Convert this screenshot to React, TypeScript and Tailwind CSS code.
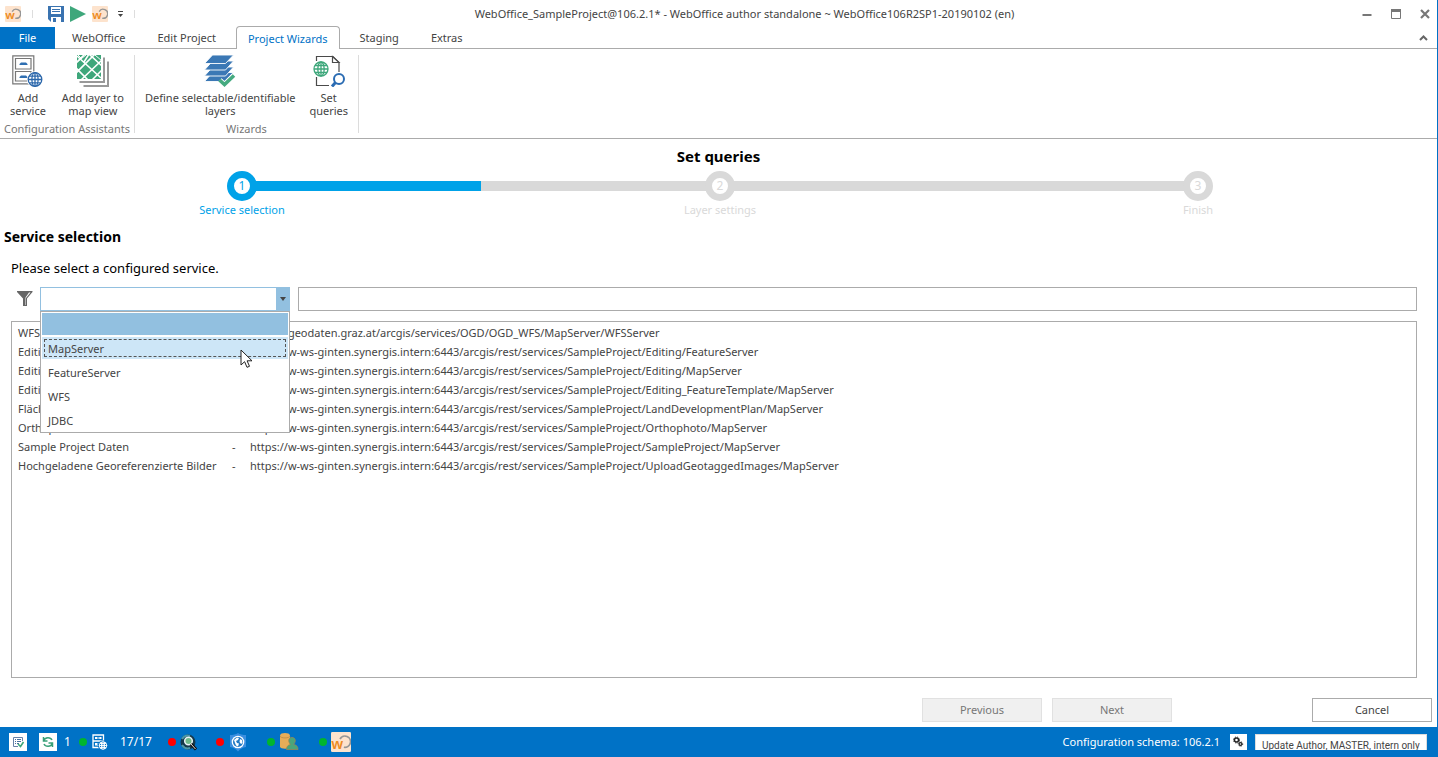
import React, { useState } from "react";

const services = [
  ["WFS", "https://geodaten.graz.at/arcgis/services/OGD/OGD_WFS/MapServer/WFSServer"],
  ["Editing", "https://w-ws-ginten.synergis.intern:6443/arcgis/rest/services/SampleProject/Editing/FeatureServer"],
  ["Editing", "https://w-ws-ginten.synergis.intern:6443/arcgis/rest/services/SampleProject/Editing/MapServer"],
  ["Editing", "https://w-ws-ginten.synergis.intern:6443/arcgis/rest/services/SampleProject/Editing_FeatureTemplate/MapServer"],
  ["Flächen", "https://w-ws-ginten.synergis.intern:6443/arcgis/rest/services/SampleProject/LandDevelopmentPlan/MapServer"],
  ["Orthophoto", "https://w-ws-ginten.synergis.intern:6443/arcgis/rest/services/SampleProject/Orthophoto/MapServer"],
  ["Sample Project Daten", "https://w-ws-ginten.synergis.intern:6443/arcgis/rest/services/SampleProject/SampleProject/MapServer"],
  ["Hochgeladene Georeferenzierte Bilder", "https://w-ws-ginten.synergis.intern:6443/arcgis/rest/services/SampleProject/UploadGeotaggedImages/MapServer"],
];

const serviceTypes = ["", "MapServer", "FeatureServer", "WFS", "JDBC"];

function Logo({ size = 16 }: { size?: number }) {
  return (
    <svg width={size} height={size} viewBox="0 0 16 16" aria-hidden="true">
      <rect width="16" height="16" rx="1" fill="#fde3cd" />
      <path d="M7.2 5.6A4.5 4.5 0 1 1 10.300 12.200" fill="none" stroke="#969696" strokeWidth="1.4" />
      <text x="0.2" y="13.2" fontSize="11.5" fontWeight="600" fontFamily="Noto Sans, sans-serif" fill="#ee8b22">w</text>
    </svg>
  );
}

function Globe({ cx, cy, r, color, width = 1.3 }: { cx: number; cy: number; r: number; color: string; width?: number }) {
  return (
    <g fill="none" stroke={color} strokeWidth={width}>
      <circle cx={cx} cy={cy} r={r} fill="#fff" />
      <ellipse cx={cx} cy={cy} rx={r / 2.2} ry={r} />
      <path d={`M${cx - r} ${cy}h${2 * r}M${cx} ${cy - r}v${2 * r}M${cx - r * 0.85} ${cy - r / 2}h${r * 1.7}M${cx - r * 0.85} ${cy + r / 2}h${r * 1.7}`} />
    </g>
  );
}

function SaveIcon() {
  return (
    <svg width="16" height="16" viewBox="0 0 16 16" aria-hidden="true">
      <path d="M0 0h16v16H3l-3-3z" fill="#3a73b0" />
      <path d="M3 1h10v7H3z" fill="#fff" />
      <path d="M4 3.500h8M4 5.500h8" stroke="#3a73b0" />
      <path d="M3 11h10v5H3z" fill="#fff" />
      <path d="M5 12h3v4H5z" fill="#3a73b0" />
    </svg>
  );
}

function CabinetIcon() {
  return (
    <svg width="32" height="32" viewBox="0 0 32 32" aria-hidden="true">
      <path d="M.8.8h21v28h-21z" fill="#fff" stroke="#777" strokeWidth="1.2" />
      <path d="M3.500 3.500h15.500v10.500H3.500zM3.500 16.500h15.500v9.500H3.500z" fill="#fff" stroke="#777" strokeWidth="1.2" />
      <path d="M7.500 10V9l1.500-1.500h5L15.500 9v1zM7.500 23v-1l1.500-1.500h5l1.500 1.500v1z" fill="#2f6fb2" />
      <circle cx="23" cy="24.500" r="8.200" fill="#fff" />
      <Globe cx={23} cy={24.5} r={6.8} color="#2b67ab" />
    </svg>
  );
}

function MapLayerIcon() {
  return (
    <svg width="32" height="32" viewBox="0 0 32 32" aria-hidden="true">
      <path d="M27 2.500V27H2.500M31 6.500V31H6.500" fill="none" stroke="#999" strokeWidth="2" />
      <path d="M0 0h24v24H0z" fill="#3ea77b" />
      <path d="M-1 8 8-1M-1 18 18-1M4 25 25 5M15 25 25 15M0 1l24 22M-1 13l12 12M12-1l13 12M7 7l5-8" fill="none" stroke="#fff" strokeWidth="1.6" />
      <path d="M1 0l4 4M0 7l9-7M18 0l7 6" stroke="#fff" strokeWidth="1" />
    </svg>
  );
}

function LayersIcon() {
  return (
    <svg width="32" height="32" viewBox="0 0 32 32" aria-hidden="true">
      <g fill="#3b78b5" stroke="#fff" strokeWidth=".9">
        <path d="M8.500 17.500H29.500L21.500 26.500H.5z" />
        <path d="M8.500 12H29.500L21.500 21H.5z" />
        <path d="M8.500 6H29.500L21.500 15H.5z" />
        <path d="M8.500 0H29.500L21.500 8.500H.5z" />
      </g>
      <path d="M15.500 25.500l5 4.500L30 20.500" fill="none" stroke="#fff" strokeWidth="6" />
      <path d="M15.500 25l5 4.500L30 20.500" fill="none" stroke="#45aa80" strokeWidth="3.600" />
    </svg>
  );
}

function QueryIcon() {
  return (
    <svg width="32" height="32" viewBox="0 0 32 32" aria-hidden="true">
      <path d="M3.500 6V1.500H20l6 6v9.500M3.500 22v8.500H16" fill="none" stroke="#4a4a4a" strokeWidth="1.200" />
      <path d="M19.500 1.500v6H26z" fill="#fff" stroke="#4a4a4a" strokeWidth="1.200" />
      <Globe cx={8} cy={14} r={7} color="#3ea77b" />
      <circle cx="26" cy="24" r="5" fill="#fff" stroke="#2b6cb3" strokeWidth="2" />
      <path d="M22.500 27.500l-3.500 4" stroke="#2b6cb3" strokeWidth="3" />
    </svg>
  );
}

function FunnelIcon() {
  return (
    <svg width="16" height="16" viewBox="0 0 16 16" aria-hidden="true">
      <path d="M0 0h15.500v1L10 7.500V15H6V7.500L0 1z" fill="#666" />
      <path d="M10.500 1.500h3L9 7v7H8.500V6.500L12 1.500z" fill="#fff" />
    </svg>
  );
}

function Cursor() {
  return (
    <svg width="13" height="20" viewBox="0 0 13 20" aria-hidden="true">
      <path d="M1 1v15l3.600-3.300 2.400 5.600 2.500-1-2.400-5.500H12z" fill="#fff" stroke="#222" strokeWidth="1" />
    </svg>
  );
}

function RibbonButton({ icon, lines }: { icon: React.ReactNode; lines: string[] }) {
  return (
    <button className="flex flex-col items-center gap-1 leading-[13px]">
      {icon}
      <span className="flex flex-col items-center">
        {lines.map((l) => (
          <span key={l} className="whitespace-nowrap">{l}</span>
        ))}
      </span>
    </button>
  );
}

function RibbonGroup({ label, className, children }: { label: string; className: string; children: React.ReactNode }) {
  return (
    <section className={`flex flex-col border-r border-[#dcdcdc] ${className}`}>
      <div className="flex justify-between px-[10px]">{children}</div>
      <h2 className="mt-1 text-center leading-4 whitespace-nowrap text-[#777]">{label}</h2>
    </section>
  );
}

function Step({ n, label, active, left, right }: { n: number; label: string; active?: boolean; left: string; right: string }) {
  return (
    <li className={`flex flex-1 flex-col items-center ${active ? "text-[#00a2e8]" : "text-[#d9d9d9]"}`}>
      <div className="flex w-full items-center">
        <span className={`h-[10px] flex-1 ${left}`} />
        <span className={`-mx-px flex size-[30px] items-center justify-center rounded-full border-[7px] text-[12px] leading-none ${active ? "border-[#00a2e8]" : "border-[#d9d9d9]"}`}>
          {n}
        </span>
        <span className={`h-[10px] flex-1 ${right}`} />
      </div>
      <span className="leading-[18px]">{label}</span>
    </li>
  );
}

function Dot({ color }: { color: string }) {
  return <span className={`size-2 rounded-full ${color}`} />;
}

export default function App() {
  const [type, setType] = useState("");
  const [text, setText] = useState("");
  const [open, setOpen] = useState(true);
  const tab = "px-3 leading-[21px]";

  return (
    <div className="flex min-h-screen flex-col border-r border-[#0072c6] bg-white font-['Noto_Sans','Open_Sans',sans-serif] text-[11px] text-[#444]">
      <header>
        <div className="flex h-[27px] items-center pr-[7px] pl-[5px]">
          <div className="flex flex-1 items-center">
            <Logo />
            <span className="mx-[11px] h-2 w-px bg-[#ddd]" />
            <button aria-label="Save" className="ml-1"><SaveIcon /></button>
            <button aria-label="Run" className="ml-[6px]">
              <svg width="16" height="16" viewBox="0 0 16 16"><path d="M0 0l16 8-16 8z" fill="#3ea77b" /></svg>
            </button>
            <button aria-label="WebOffice" className="ml-[6px]"><Logo /></button>
            <button aria-label="Customize toolbar" className="ml-[9px]">
              <svg width="7" height="8" viewBox="0 0 7 8"><path d="M1 1.500h5" stroke="#444" strokeWidth="1" /><path d="M1 4h5L3.500 7z" fill="#444" /></svg>
            </button>
            <span className="ml-[10px] h-2 w-px bg-[#ddd]" />
          </div>
          <h1 className="pt-px pl-[54px]">WebOffice_SampleProject@106.2.1* - WebOffice author standalone ~ WebOffice106R2SP1-20190102 (en)</h1>
          <div className="flex flex-1 items-center justify-end gap-[19px]">
            <button aria-label="Minimize"><svg width="10" height="10" viewBox="0 0 10 10"><path d="M.5 6h9" stroke="#777" strokeWidth="2" /></svg></button>
            <button aria-label="Maximize"><svg width="10" height="10" viewBox="0 0 10 10"><path d="M.5.5h9v9h-9z" fill="none" stroke="#777" /><path d="M0 1.500h10" stroke="#777" strokeWidth="3" /></svg></button>
            <button aria-label="Close"><svg width="10" height="10" viewBox="0 0 10 10"><path d="M1 1l8 8M9 1L1 9" stroke="#777" strokeWidth="2.200" /></svg></button>
          </div>
        </div>
        <nav className="flex h-[22px] items-stretch border-b border-[#ababab]">
          <button className="mr-[5px] -mb-px w-[55px] bg-[#0072c6] pt-px text-white">File</button>
          <div className="flex flex-1 gap-2">
            <button className={tab}>WebOffice</button>
            <button className={tab}>Edit Project</button>
            <button className="-mt-px -mb-px rounded-t-sm border border-b-0 border-[#ababab] bg-white px-[11px] leading-[21px] text-[#0072c6]">Project Wizards</button>
            <button className={tab}>Staging</button>
            <button className={tab}>Extras</button>
          </div>
          <button aria-label="Collapse ribbon" className="mr-[9px]">
            <svg width="9" height="6" viewBox="0 0 9 6"><path d="M1 5l3.500-3.500L8 5" fill="none" stroke="#666" strokeWidth="2" /></svg>
          </button>
        </nav>
        <div className="flex h-[90px] border-b border-[#ababab] pt-[6px] pb-[5px]">
          <RibbonGroup label="Configuration Assistants" className="w-[135px]">
            <RibbonButton icon={<CabinetIcon />} lines={["Add", "service"]} />
            <RibbonButton icon={<MapLayerIcon />} lines={["Add layer to", "map view"]} />
          </RibbonGroup>
          <RibbonGroup label="Wizards" className="w-[224px]">
            <RibbonButton icon={<LayersIcon />} lines={["Define selectable/identifiable", "layers"]} />
            <RibbonButton icon={<QueryIcon />} lines={["Set", "queries"]} />
          </RibbonGroup>
        </div>
      </header>

      <main className="flex flex-1 flex-col">
        <h2 className="mt-[7px] text-center text-[15px] leading-5 font-bold text-black">Set queries</h2>
        <ol className="mt-[5px] flex pl-[3px]">
          <Step n={1} label="Service selection" active left="bg-transparent" right="bg-[#00a2e8]" />
          <Step n={2} label="Layer settings" left="bg-[#d9d9d9]" right="bg-[#d9d9d9]" />
          <Step n={3} label="Finish" left="bg-[#d9d9d9]" right="bg-transparent" />
        </ol>
        <h3 className="mt-2 ml-1 text-[14px] leading-5 font-bold text-black">Service selection</h3>
        <div className="flex flex-1 flex-col pr-5 pl-[11px]">
          <p className="mt-3 text-[13px] leading-[18px] text-black">Please select a configured service.</p>
          <div className="mt-[10px] flex h-6 items-center">
            <div className="ml-[6px] w-[23px]"><FunnelIcon /></div>
            <div className="relative mr-2 h-6 w-[250px]">
              <select
                aria-label="Service type"
                value={type}
                onChange={(e) => setType(e.target.value)}
                onMouseDown={(e) => { e.preventDefault(); setOpen(!open); }}
                className="size-full appearance-none border border-[#92c0e0] bg-white px-2"
              >
                {serviceTypes.map((t) => <option key={t} value={t}>{t}</option>)}
              </select>
              <span className="pointer-events-none absolute inset-y-0 right-0 flex w-[14px] items-center justify-center bg-[#92c0e0]">
                <svg width="6" height="4" viewBox="0 0 6 4"><path d="M0 0h6L3 4z" fill="#444" /></svg>
              </span>
              {open && (
                <ul role="listbox" aria-label="Service types" className="absolute top-full left-0 z-10 w-full border border-[#ababab] bg-white px-px">
                  {serviceTypes.map((t, i) => (
                    <li key={t} role="option" aria-selected={t === type} onClick={() => { setType(t); setOpen(false); }} className="h-6 py-px">
                      <div className={`flex h-full items-center ${i === 0 ? "bg-[#92c0e0]" : i === 1 ? "bg-[#cde6f7] p-[2px]" : "px-[6px] pt-[2px]"}`}>
                        {i === 1 ? <span className="flex size-full items-center border border-dashed border-[#555] px-[3px] pt-[2px]">{t}</span> : t}
                      </div>
                    </li>
                  ))}
                  <li aria-hidden="true" className="pointer-events-none absolute top-[37px] left-[199px]"><Cursor /></li>
                </ul>
              )}
            </div>
            <input aria-label="Service filter" value={text} onChange={(e) => setText(e.target.value)} className="h-6 min-w-0 flex-1 border border-[#ababab] px-2 outline-none" />
          </div>
          <div className="mt-[10px] flex-1 border border-[#ababab] px-[6px] py-[2px]">
            <table className="border-collapse text-left whitespace-nowrap">
              <tbody>
                {services.map(([name, url]) => (
                  <tr key={url} className="h-[19px]">
                    <td className="w-[214px] p-0">{name}</td>
                    <td className="w-[18px] p-0">-</td>
                    <td className="p-0">{url}</td>
                  </tr>
                ))}
              </tbody>
            </table>
          </div>
        </div>
        <div className="flex justify-end pt-5 pr-[5px] pb-[5px]">
          <button disabled className="mr-[10px] h-6 w-[120px] border border-[#e1e1e1] bg-[#f0f0f0] text-[#777]">Previous</button>
          <button disabled className="mr-[140px] h-6 w-[120px] border border-[#e1e1e1] bg-[#f0f0f0] text-[#777]">Next</button>
          <button className="h-6 w-[120px] border border-[#ababab] bg-white">Cancel</button>
        </div>
      </main>

      <footer className="-mr-px flex h-[30px] items-center bg-[#0072c6] pl-[9px] text-white">
        <button aria-label="Validate" className="bg-white">
          <svg width="18" height="18" viewBox="0 0 18 18"><path d="M13.500 8V4.500h-9v9H9" fill="none" stroke="#6682a8" /><path d="M6 6.500h1M8 6.500h4M6 8.500h1M8 8.500h4M6 10.500h1M8 10.500h2" stroke="#49719f" /><path d="M9 11l2.500 2.500 3-4.500" fill="none" stroke="#3ea77b" strokeWidth="1.600" /></svg>
        </button>
        <button aria-label="Refresh" className="ml-3 bg-white">
          <svg width="18" height="18" viewBox="0 0 18 18" fill="none" stroke="#38a078" strokeWidth="1.500"><path d="M4.500 4v4h4M4.800 7.500C6 3.800 11.500 3.800 13 7M13.500 14v-4h-4M13.200 10.500C12 14.200 6.500 14.200 5 11" /></svg>
        </button>
        <span className="ml-[7px] w-[15px] text-[12px]">1</span>
        <Dot color="bg-[#00b52d]" />
        <svg className="ml-[5px]" width="16" height="16" viewBox="0 0 16 16" aria-hidden="true"><path d="M1 1h10.500v12.500H1zM1 7h10.500" fill="none" stroke="#fff" strokeWidth="1.300" /><path d="M3 3h6.500v2H3zM3 9h6.500v2.500H3z" fill="#fff" /><path d="M5 4h2.500M5 10h2.500" stroke="#0072c6" /><circle cx="11" cy="11.500" r="5" fill="#0072c6" /><g fill="none" stroke="#fff" strokeWidth=".9"><circle cx="11" cy="11.500" r="3.800" /><path d="M11 7.500v8M7 11.500h8M8 9.500h6M8 13.500h6M9.500 8v7M12.500 8v7" /></g></svg>
        <span className="ml-3 w-12 text-[12px]">17/17</span>
        <Dot color="bg-[#ff0000]" />
        <svg className="ml-1" width="17" height="17" viewBox="0 0 17 17" aria-hidden="true"><circle cx="8" cy="8" r="7.500" fill="#16384a" /><path d="M2 5c2-3 5-4 8-3M2 11c2 3 5 4 8 3" stroke="#4c98a6" strokeWidth="2" fill="none" /><circle cx="8.500" cy="7" r="3.800" fill="#6fb98a" stroke="#e6f2f5" strokeWidth="1.500" /><path d="M11 10l5 5.500" stroke="#111" strokeWidth="3" /><path d="M11 10l4.500 5" stroke="#ddd" strokeWidth="1" /></svg>
        <span className="w-[19px]" />
        <Dot color="bg-[#ff0000]" />
        <svg className="ml-[5px]" width="18" height="19" viewBox="0 0 18 19" aria-hidden="true"><path d="M1 2c3 0 6-.5 8-2 2 1.500 5 2 8 2v12c-3 .5-6 2-8 4.500C7 16 4 14.500 1 14z" fill="#3b8fe0" /><circle cx="9" cy="9" r="6.300" fill="#fff" /><circle cx="9" cy="9" r="5" fill="#1f78c4" /><path d="M5 7l3-2.500 2 .5-1 2-2 1 1 2 2 .5-1 3-2-1-1-2.500zM11 6l2 1 .5 3-1.500 1-1.500-2z" fill="#fff" /></svg>
        <span className="w-5" />
        <Dot color="bg-[#00b52d]" />
        <svg className="ml-[5px]" width="19" height="18" viewBox="0 0 19 18" aria-hidden="true"><path d="M0 2.500c0-3.300 10-3.300 10 0v11c0 3-10 3-10 0z" fill="#e6ad58" /><path d="M0 3c0 2.500 10 2.500 10 0" fill="none" stroke="#b98a45" strokeWidth=".8" /><path d="M6.500 16.500c0-3 1.500-4.500 4-5-2.500-2.500-2.500-7 1.500-7s4 4.500 1.500 7c3 .5 4.500 2 4.500 5z" fill="#4aa67a" stroke="#9b8654" strokeWidth=".8" /></svg>
        <span className="w-5" />
        <Dot color="bg-[#00b52d]" />
        <span className="ml-1"><Logo size={20} /></span>
        <span className="ml-auto">Configuration schema: 106.2.1</span>
        <button aria-label="Settings" className="ml-[10px] bg-white">
          <svg width="17" height="16" viewBox="0 0 17 16" fill="none" stroke="#222"><circle cx="6.500" cy="6" r="2" strokeWidth="1.400" /><circle cx="6.500" cy="6" r="3" strokeDasharray="1.200 1.200" /><circle cx="10.500" cy="10" r="1.400" strokeWidth="1.200" /><circle cx="10.500" cy="10" r="2.200" strokeDasharray="1 1" /></svg>
        </button>
        <div className="mr-[11px] ml-2 h-4 w-[172px] overflow-hidden border border-b-0 border-[#ddd] bg-white px-[6px] pt-[3px] font-[Roboto,'Noto_Sans',sans-serif] text-[10px] leading-4 whitespace-nowrap text-[#444]">Update Author, MASTER, intern only</div>
      </footer>
    </div>
  );
}
